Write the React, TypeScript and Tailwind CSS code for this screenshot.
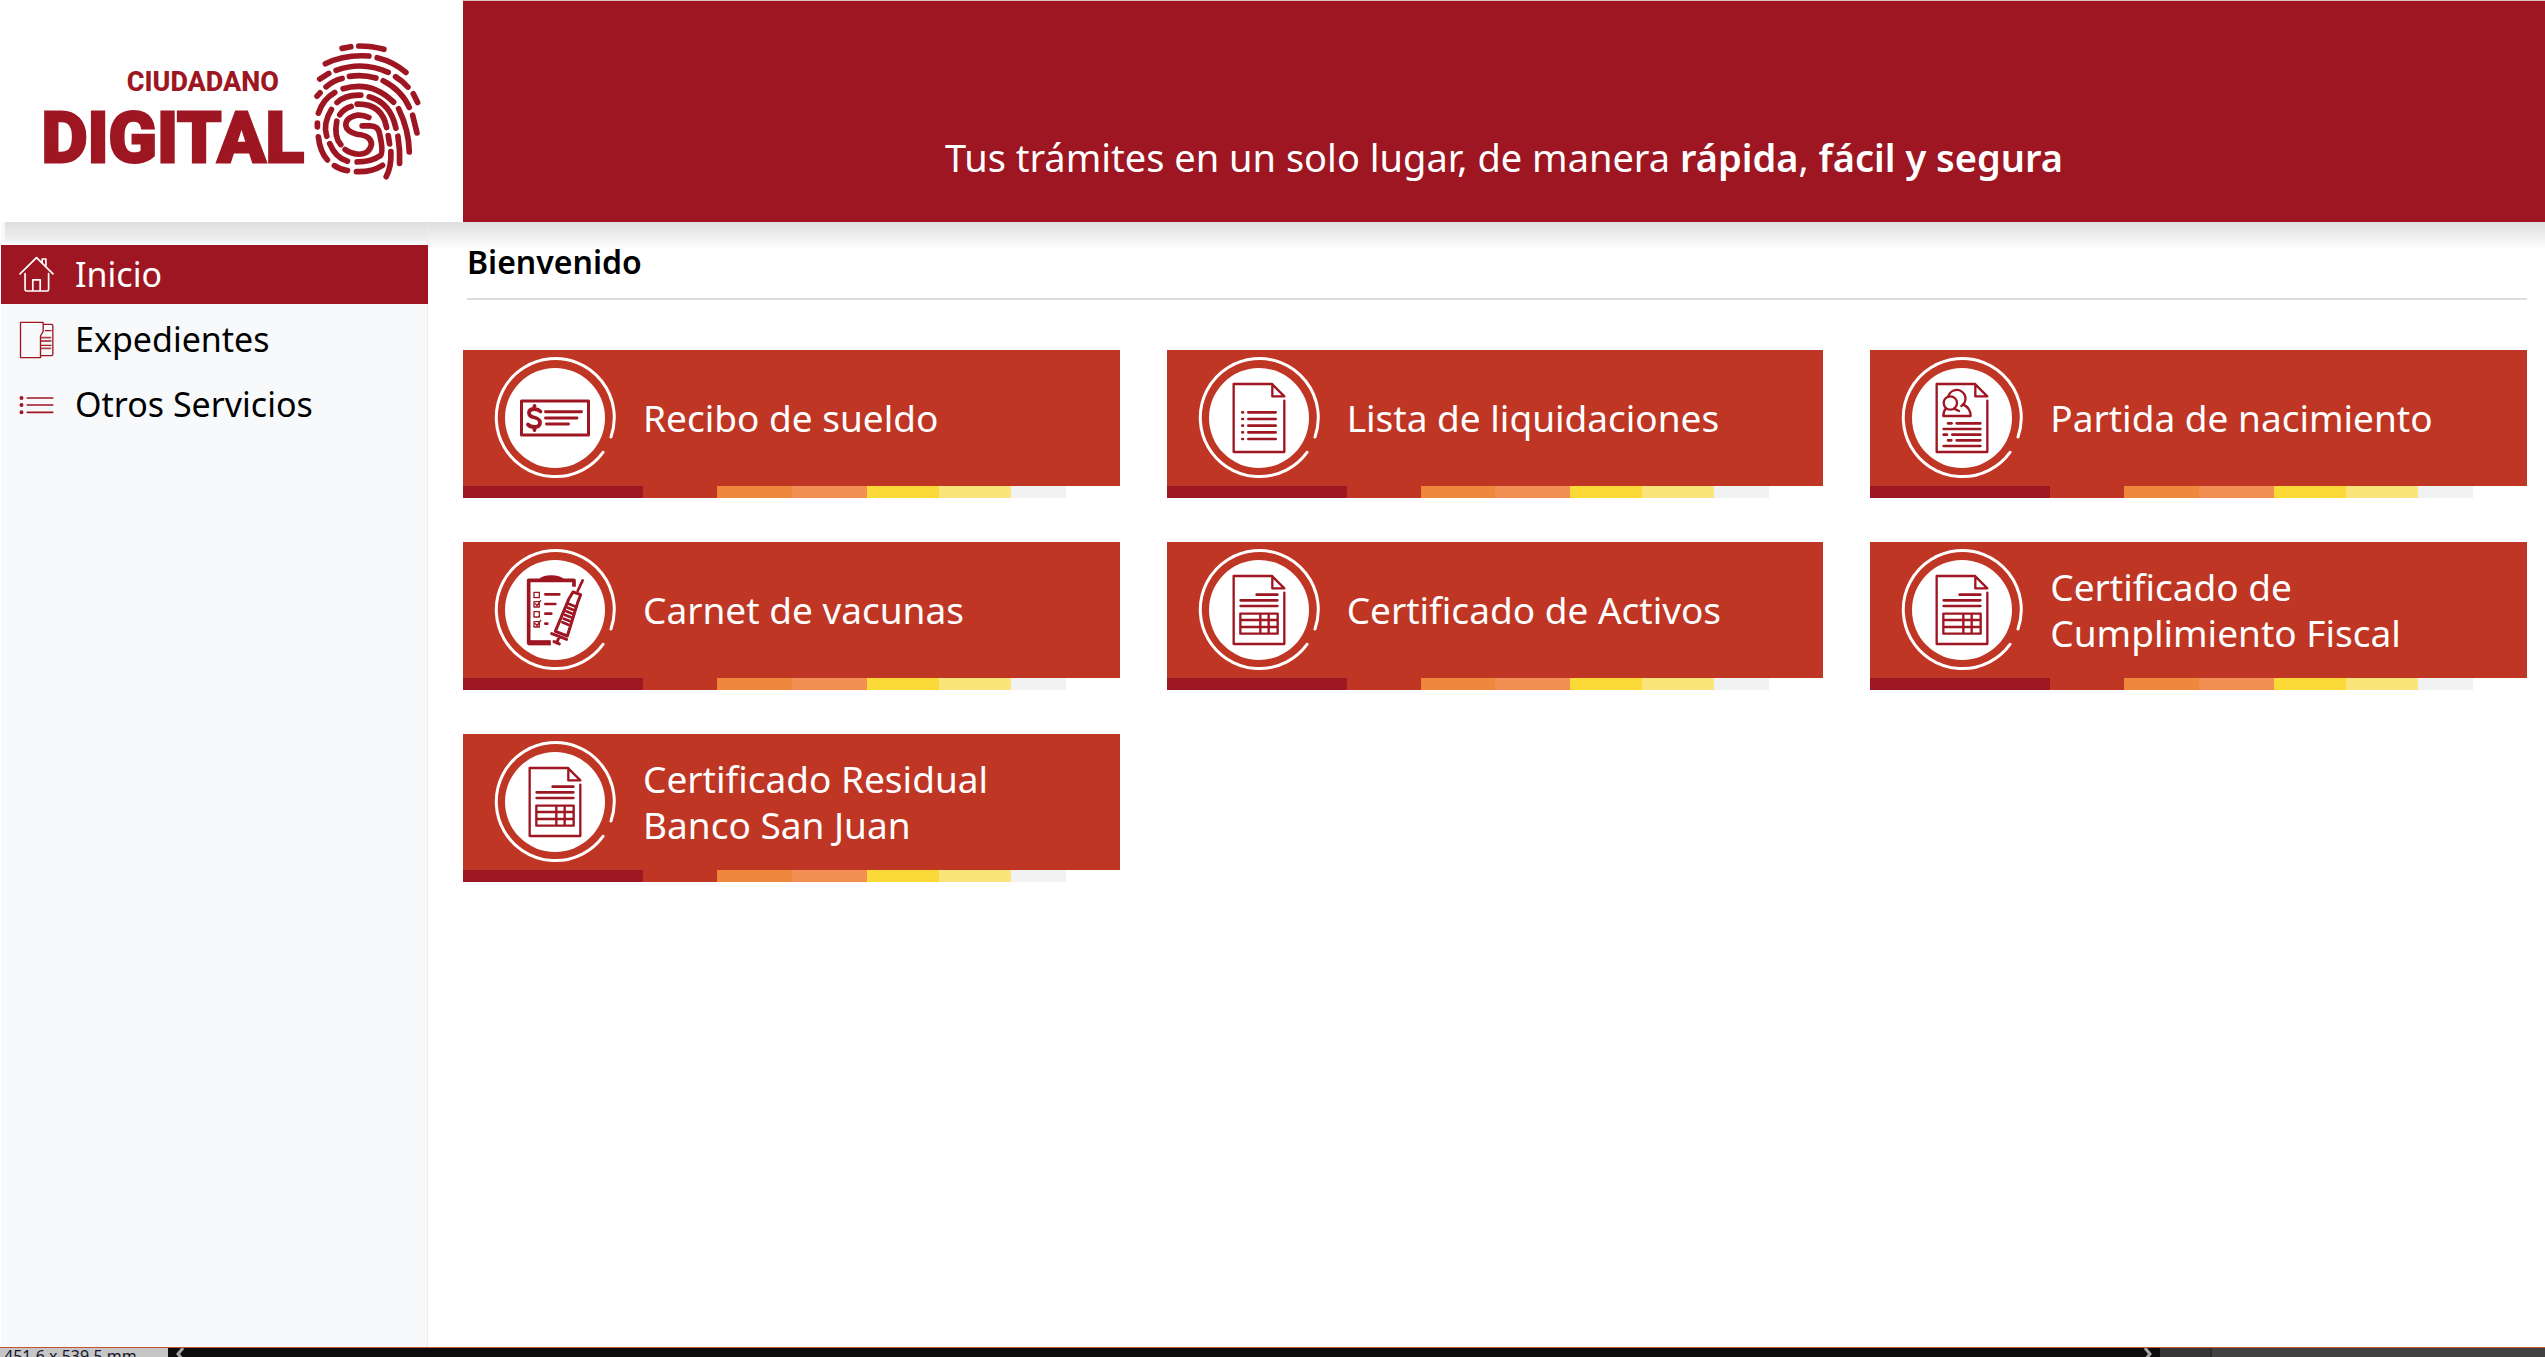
import type { ReactNode } from "react";

const RIDGES = [
  "M128 85L154 80",
  "M178 78Q218 78 253 88",
  "M78 131Q135 103 208 108",
  "M233 113Q282 125 319 157",
  "M61 177L88 160",
  "M110 151Q190 122 266 157",
  "M288 170Q308 182 325 201",
  "M80 200Q103 180 128 175",
  "M150 169Q190 162 229 174",
  "M53 228L62 218",
  "M57 279Q70 238 106 217",
  "M131 206Q215 180 282 246",
  "M251 182Q307 211 329 262",
  "M341 221L354 247",
  "M113 247Q138 223 184 225",
  "M209 230Q273 248 289 324",
  "M96 268Q70 310 82 348",
  "M121 284Q133 265 155 259",
  "M173 252Q248 250 261 322",
  "M112 303Q103 350 124 373",
  "M208 292Q190 283 172 285Q138 292 139 316Q142 334 172 342Q216 346 216 372Q210 402 177 402Q152 400 137 388",
  "M188 317H212Q236 317 240 340Q254 400 241 407Q215 425 173 425",
  "M297 266Q328 330 329 395",
  "M339 285L352 338",
  "M266 346L270 371",
  "M295 348Q302 390 300 429",
  "M54 309V320",
  "M57 350Q62 395 84 419",
  "M91 370Q108 412 144 423",
  "M105 436Q122 448 144 451",
  "M171 454Q216 456 249 435",
  "M274 394Q276 440 260 469",
];

function Fingerprint() {
  return (
    <svg className="h-[139px] w-[107px] shrink-0" viewBox="44 66 320 416" fill="none" stroke="#9d1622" strokeWidth="17" strokeLinecap="round" aria-hidden="true">
      {RIDGES.map((d) => (
        <path key={d} d={d} />
      ))}
    </svg>
  );
}

function HomeIcon() {
  return (
    <svg className="h-[37px] w-[35px] shrink-0" viewBox="58 138 104 110" fill="none" stroke="currentColor" strokeWidth="5" strokeLinejoin="round" strokeLinecap="round" aria-hidden="true">
      <path d="M61 191L110 143L159 191M127 157V147H138V168M76 190V237Q76 242 81 242H141Q146 242 146 237V190M99 242V209H121V242" />
    </svg>
  );
}

function FolderIcon() {
  return (
    <svg className="h-[38px] w-[35px] shrink-0" viewBox="58 331 104 114" fill="none" stroke="#9d1622" strokeWidth="4" strokeLinejoin="round" aria-hidden="true">
      <path d="M62 335H130V362L122 376V441H62ZM131 341H155Q159 341 159 345V431Q159 435 155 435H123M135 360H155M122 391H155M122 404H155" />
      <path d="M122 381H154M122 413H154" strokeWidth="5" opacity=".8" />
    </svg>
  );
}

function ListIcon() {
  return (
    <svg className="h-[20px] w-[35px] shrink-0" viewBox="58 556 104 60" fill="#9d1622" stroke="#9d1622" strokeWidth="5" strokeLinecap="round" aria-hidden="true">
      <path d="M82 565H159M82 586H159M82 608H159" />
      <circle cx="65" cy="565" r="3.5" />
      <circle cx="65" cy="586" r="3.5" />
      <circle cx="65" cy="608" r="3.5" />
    </svg>
  );
}

const CHECK = (
  <g transform="translate(62 62)">
    <rect x="-33.5" y="-17" width="67" height="34" strokeWidth="3" />
    <path d="M-9.500 -6.300H26.500M-9.500 0H22M-8.500 6H13.500" strokeWidth="2.900" />
    <path d="M-14.500 -6.500Q-17 -9 -20.500 -9Q-26 -9 -26 -5Q-26 -1.500 -20.500 -0.500Q-15 1 -15 4.500Q-15 9 -20.500 9Q-25 9 -27 6.500M-20.500 -12V-9M-20.500 9V12" strokeWidth="3.800" />
  </g>
);

const SHEET = "M329 130H214V334H366V180M330 131V167H366Z";

const LIST_SHEET = (
  <g transform="translate(62 62) scale(.3333) translate(-290 -232)" strokeWidth="7">
    <path d={SHEET} />
    <path d="M258 215H340M258 235H340M258 255H340M258 275H340M258 295H340" strokeWidth="8" />
    <path d="M240 215H242M240 235H242M240 255H242M240 275H242M240 295H242" strokeWidth="8" />
  </g>
);

const BIRTH_SHEET = (
  <g transform="translate(62 62) scale(.3333) translate(-304 -232)" strokeWidth="7">
    <path d={SHEET} transform="translate(14 0)" />
    <path d="M263 168A26 26 0 1 1 302 196" />
    <circle cx="269" cy="187" r="20" />
    <path d="M256 203Q248 211 248 226H330Q330 202 307 191M280 204L295 211" />
    <path d="M262 248H273M288 248H359M249 265H359M249 282H259M275 282H359M262 299H272M288 299H359M249 316H359" strokeWidth="8" />
  </g>
);

const TABLE_SHEET = (
  <g transform="translate(62 62) scale(.3333) translate(-290 -232)" strokeWidth="7">
    <path d={SHEET} />
    <path d="M283 186H345M235 203H345M235 220H345" strokeWidth="8" />
    <path d="M234 243H346V303H234ZM234 262H346M234 283H346M294 243V303M319 243V303" />
  </g>
);

const VACCINE = (
  <g transform="translate(62 62) scale(.3333) translate(-284 -238)">
    <path d="M341 168V149H205V338H271" strokeWidth="11" strokeLinecap="butt" />
    <path d="M204 336H271" strokeWidth="15" strokeLinecap="butt" />
    <path d="M236 146Q246 134 272 134Q300 134 311 146V154H236Z" fill="#9d1622" stroke="none" />
    <path d="M255 191H297M255 220H285M255 249H273M255 279H261" strokeWidth="8" />
    <path d="M221 185H237V201H221ZM221 213H237V229H221ZM221 243H237V259H221ZM221 273H237V289H221ZM225 219L230 225L241 210M225 279L230 285L241 269" strokeWidth="4" />
    <path d="M367 149L352 181" strokeWidth="8" />
    <path d="M338 184L361 192L353 213L321 316L285 302L325 206Z" fill="#fff" strokeWidth="9" />
    <path d="M326 220L343 227M322 231L340 238M318 242L336 249M314 253L332 260M310 264L328 271M306 275L324 282" strokeWidth="8" />
    <path d="M274 309L319 326M297 317L289 337M281 333L297 340" strokeWidth="9" />
  </g>
);

const SERVICES: { lines: string[]; icon: ReactNode }[] = [
  { lines: ["Recibo de sueldo"], icon: CHECK },
  { lines: ["Lista de liquidaciones"], icon: LIST_SHEET },
  { lines: ["Partida de nacimiento"], icon: BIRTH_SHEET },
  { lines: ["Carnet de vacunas"], icon: VACCINE },
  { lines: ["Certificado de Activos"], icon: TABLE_SHEET },
  { lines: ["Certificado de", "Cumplimiento Fiscal"], icon: TABLE_SHEET },
  { lines: ["Certificado Residual", "Banco San Juan"], icon: TABLE_SHEET },
];

function ServiceCard({ lines, icon }: { lines: string[]; icon: ReactNode }) {
  return (
    <a href="#" className="block">
      <div className="flex h-[136px] items-center gap-[26px] bg-[#bf3624] pl-[30px] text-white">
        <svg className="size-[124px] shrink-0" viewBox="0 0 124 124" fill="none" aria-hidden="true">
          <path d="M110 96.300A59 59 0 1 1 118 81" stroke="#fff" strokeWidth="3" strokeLinecap="round" />
          <circle cx="62" cy="62" r="50" fill="#fff" />
          <g stroke="#9d1622" strokeLinejoin="round" strokeLinecap="round">{icon}</g>
        </svg>
        <span className="text-[37px] leading-[46px]">
          {lines.map((l) => (
            <span key={l} className="block">{l}</span>
          ))}
        </span>
      </div>
      <div className="grid h-3 grid-cols-[180fr_74fr_75fr_75fr_72fr_72fr_55fr_54fr]">
        <span className="bg-[#9d1822]" />
        <span className="bg-[#bf3624]" />
        <span className="bg-[#ed883d]" />
        <span className="bg-[#f38f53]" />
        <span className="bg-[#fbda37]" />
        <span className="bg-[#fbe47a]" />
        <span className="bg-[#f2f2f2]" />
      </div>
    </a>
  );
}

const MENU = [
  { label: "Inicio", icon: <HomeIcon />, active: true },
  { label: "Expedientes", icon: <FolderIcon />, active: false },
  { label: "Otros Servicios", icon: <ListIcon />, active: false },
];

export default function App() {
  return (
    <div className="flex min-h-screen flex-col bg-white font-['Noto_Sans',sans-serif] text-black">
      <header className="flex h-[222px]">
        <div className="flex w-[463px] shrink-0 items-start gap-[10px] pt-[42px] pl-[41px] font-['Roboto',sans-serif] text-[#9d1622]">
          <div className="flex w-[263px] flex-col items-end pt-[26px]">
            <span className="pr-[25px] text-[27px] leading-[28px] font-extrabold">CIUDADANO</span>
            <span className="pt-1 text-[71px] leading-[76px] font-extrabold [-webkit-text-stroke:3px_#9d1622]">DIGITAL</span>
          </div>
          <Fingerprint />
        </div>
        <div className="flex flex-1 items-end justify-center border-t border-[#dfc0bd] bg-[#9d1622] pb-[41px]">
          <p className="text-[38px] leading-[48px] text-white">
            Tus trámites en un solo lugar, de manera <b className="font-semibold">rápida</b>, <b className="font-semibold">fácil y segura</b>
          </p>
        </div>
      </header>

      <div className="flex flex-1">
        <nav className="ml-px flex w-[427px] shrink-0 flex-col border-r border-[#ebebed] bg-[#f8f9fb]">
          <div className="mb-[4px] ml-1 h-[19px] bg-linear-to-b from-[#dedede] to-[#f1f1f1]" />
          <ul className="-mr-px flex flex-col gap-[6px]">
            {MENU.map(({ label, icon, active }) => (
              <li key={label}>
                <a href="#" className={active ? "flex h-[59px] items-center gap-[21px] bg-[#9d1622] pl-[18px] text-[34px] text-white" : "flex h-[59px] items-center gap-[21px] pl-[18px] text-[34px]"}>
                  {icon}
                  {label}
                </a>
              </li>
            ))}
          </ul>
        </nav>

        <main className="flex-1 bg-[linear-gradient(#dedede,#fff_28px)] pt-5 pr-[18px] pl-[35px]">
          <h1 className="ml-1 text-[32px] leading-[40px] font-semibold">Bienvenido</h1>
          <hr className="mt-4 ml-1 border-t-2 border-[#dddddd]" />
          <div className="mt-[50px] grid grid-cols-3 gap-x-[47px] gap-y-11">
            {SERVICES.map((s) => (
              <ServiceCard key={s.lines.join(" ")} {...s} />
            ))}
          </div>
        </main>
      </div>

      <footer className="flex h-[10px] overflow-hidden border-t border-[#c4532f] bg-[#0c0c0c] text-[16px] leading-[16px]">
        <div className="w-[168px] shrink-0 bg-[#c6c6c6] pl-1 whitespace-nowrap text-[#16162c]">451,6 x 539,5 mm</div>
        <svg className="ml-2 h-[18px] w-2 shrink-0" viewBox="0 0 8 18" fill="none" stroke="#a5a5a5" strokeWidth="3" aria-hidden="true">
          <path d="M7 0L2 6L7 12" />
        </svg>
        <div className="flex-1" />
        <svg className="mr-2 h-[18px] w-2 shrink-0" viewBox="0 0 8 18" fill="none" stroke="#a5a5a5" strokeWidth="3" aria-hidden="true">
          <path d="M1 0L6 6L1 12" />
        </svg>
        <div className="w-[52px] border-r-2 border-[#2c2c2c] bg-[#373737]" />
        <div className="w-[333px] bg-[#424242]" />
      </footer>
    </div>
  );
}
